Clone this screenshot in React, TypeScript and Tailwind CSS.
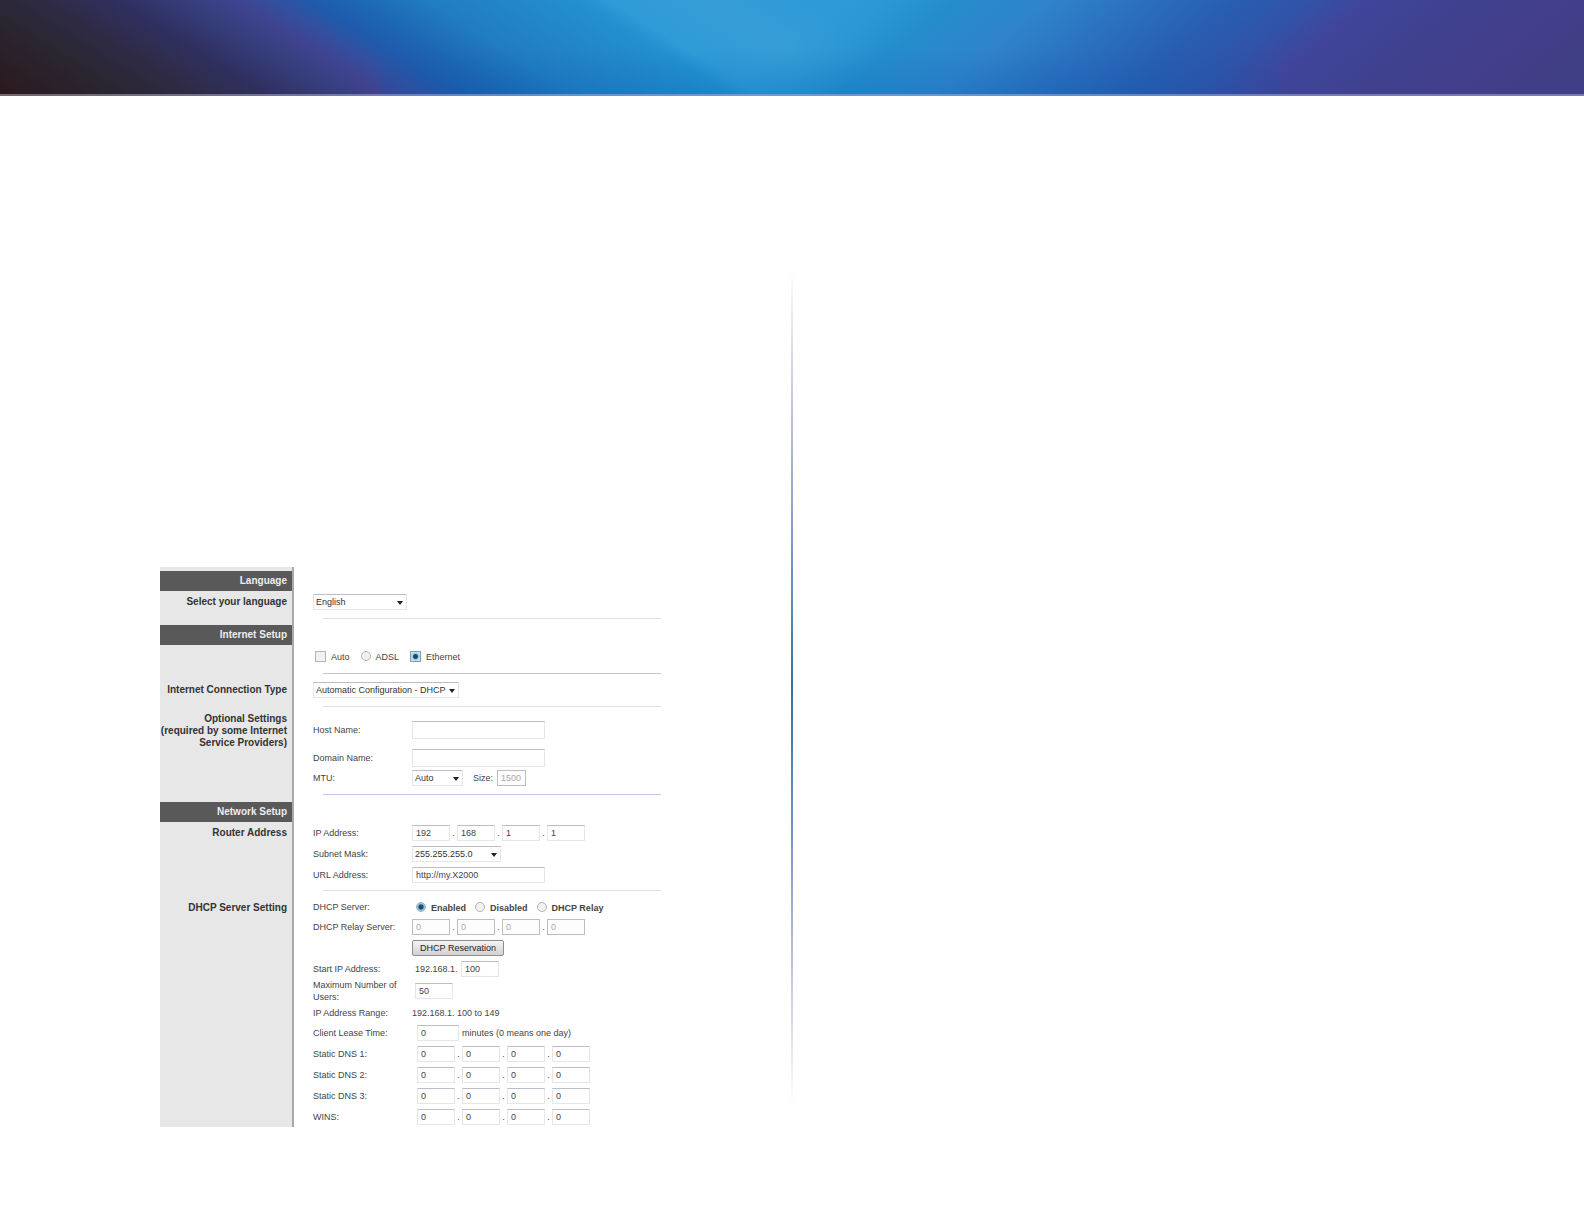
import type { InputHTMLAttributes, ReactNode } from 'react'
import clsx from 'clsx'

const inputBase =
  'border border-[#e6e6ea] border-t-[#bcbcc4] bg-white px-[3px] text-[9px] leading-3 text-[#444] outline-none disabled:border-[#bdbdbd] disabled:bg-[#fdfdfd] disabled:text-[#aaa]'

function Banner() {
  return (
    <svg className="block h-24 w-full" viewBox="0 0 1584 96" preserveAspectRatio="none" aria-hidden="true">
      <defs>
        <linearGradient id="left" gradientUnits="userSpaceOnUse" x1="-160" x2="800" y1="0" y2="0" gradientTransform="matrix(1 0 1.6 1 0 0)">
          <stop offset="0" stopColor="#2b191c" />
          <stop offset="0.14" stopColor="#2a2631" />
          <stop offset="0.22" stopColor="#2f2b47" />
          <stop offset="0.29" stopColor="#2f3060" />
          <stop offset="0.36" stopColor="#363e7c" />
          <stop offset="0.41" stopColor="#40438f" />
          <stop offset="0.45" stopColor="#334f9f" />
          <stop offset="0.49" stopColor="#1f5bac" />
          <stop offset="0.54" stopColor="#1d68b4" />
          <stop offset="0.61" stopColor="#217cc1" />
          <stop offset="0.77" stopColor="#2390cf" />
          <stop offset="0.8" stopColor="#2f9bd7" />
          <stop offset="0.9" stopColor="#369dd6" />
          <stop offset="1" stopColor="#2f9ad8" />
        </linearGradient>
        <linearGradient id="right" gradientUnits="userSpaceOnUse" x1="840" x2="1640" y1="0" y2="0" gradientTransform="matrix(1 0 -1.2 1 0 0)">
          <stop offset="0" stopColor="#2a98d4" stopOpacity="0" />
          <stop offset="0.14" stopColor="#248dcc" />
          <stop offset="0.26" stopColor="#2f84cb" />
          <stop offset="0.38" stopColor="#2a70be" />
          <stop offset="0.5" stopColor="#285db0" />
          <stop offset="0.58" stopColor="#3054a9" />
          <stop offset="0.66" stopColor="#40459a" />
          <stop offset="0.8" stopColor="#3f418e" />
          <stop offset="0.92" stopColor="#433e8b" />
          <stop offset="1" stopColor="#403e84" />
        </linearGradient>
        <linearGradient id="shade" x1="0" x2="0" y1="0" y2="1">
          <stop offset="0.5" stopColor="#0058b0" stopOpacity="0" />
          <stop offset="1" stopColor="#0058b0" stopOpacity="0.2" />
        </linearGradient>
      </defs>
      <rect width="1584" height="96" fill="url(#left)" />
      <rect width="1584" height="96" fill="url(#right)" />
      <rect x="380" width="900" height="96" fill="url(#shade)" />
      <rect y="94" width="1584" height="2" fill="#b9b4cc" opacity="0.5" />
    </svg>
  )
}

function SideHeading({ children }: { children: ReactNode }) {
  return <h2 className="h-5 bg-[#595959] pr-[5px] text-[10px] leading-5 font-bold text-[#eee]">{children}</h2>
}

function SideLabel({ children, className }: { children: ReactNode; className?: string }) {
  return <p className={clsx('pr-[5px] text-[10px] leading-3 font-bold text-[#333]', className)}>{children}</p>
}

function Row({ label, htmlFor, children }: { label: string; htmlFor?: string; children: ReactNode }) {
  return (
    <div className="flex min-h-5 items-center">
      <label htmlFor={htmlFor} className="w-[99px] shrink-0 pr-2 text-[9px] leading-3">
        {label}
      </label>
      {children}
    </div>
  )
}

function Divider({ className = 'border-[#dcdce2]' }: { className?: string }) {
  return <hr className={clsx('ml-2.5 w-[338px] border-t', className)} />
}

function Select({ id, label, options, className }: { id: string; label?: string; options: string[]; className: string }) {
  return (
    <span className={clsx('relative inline-block', className)}>
      <select
        id={id}
        aria-label={label}
        className="block h-4 w-full appearance-none border border-[#e6e6ea] border-t-[#bcbcc4] bg-white px-0.5 text-[9px] leading-3 text-[#333] outline-none"
      >
        {options.map((option) => (
          <option key={option}>{option}</option>
        ))}
      </select>
      <svg className="pointer-events-none absolute top-[7px] right-1 h-1 w-1.5" viewBox="0 0 6 4" aria-hidden="true">
        <path d="M0 0h6L3 4z" fill="#222" />
      </svg>
    </span>
  )
}

function Octets({ name, id, values, disabled }: { name: string; id: string; values: string[]; disabled?: boolean }) {
  return (
    <div className="flex items-center">
      {values.map((value, i) => (
        <div key={i} className="flex items-center">
          {i > 0 && <span className="w-[7px] text-center text-[9px] leading-3">.</span>}
          <input
            id={i === 0 ? id : undefined}
            aria-label={`${name} octet ${i + 1}`}
            defaultValue={value}
            disabled={disabled}
            className={clsx(inputBase, 'h-4 w-[38px]')}
          />
        </div>
      ))}
    </div>
  )
}

interface RadioProps extends InputHTMLAttributes<HTMLInputElement> {
  text: string
  square?: boolean
  bold?: boolean
}

function Radio({ text, square, bold, className, ...props }: RadioProps) {
  return (
    <label className={clsx('flex items-center gap-[5px] text-[9px] leading-3', bold && 'font-bold', className)}>
      <input
        type="radio"
        className={clsx(
          'appearance-none border border-[#b4b4b4] bg-[#f1f1f1]',
          square
            ? 'size-[11px] checked:border-[#7d9db0] checked:bg-[radial-gradient(circle,#174f6c_2px,#9ccbe0_3px,#d5e6ee_5px)]'
            : 'size-2.5 rounded-full checked:border-[#9ab0bd] checked:bg-[radial-gradient(circle,#174f6c_2px,#7fb3cc_3px,#e3eef3_5px)]',
        )}
        {...props}
      />
      <span className="pt-0.5">{text}</span>
    </label>
  )
}

function Sidebar() {
  return (
    <aside className="w-[134px] shrink-0 border-r-2 border-[#a9a9a9] bg-[#e7e7e7] pt-1 text-right">
      <SideHeading>Language</SideHeading>
      <SideLabel className="pt-[5px] pb-[17px]">Select your language</SideLabel>
      <SideHeading>Internet Setup</SideHeading>
      <SideLabel className="pt-[39px]">Internet Connection Type</SideLabel>
      <SideLabel className="pt-[17px] pb-[53px]">
        Optional Settings
        <br />
        <span className="whitespace-nowrap">(required by some Internet</span>
        <br />
        Service Providers)
      </SideLabel>
      <SideHeading>Network Setup</SideHeading>
      <SideLabel className="pt-[5px]">Router Address</SideLabel>
      <SideLabel className="pt-[63px]">DHCP Server Setting</SideLabel>
    </aside>
  )
}

const zeros = ['0', '0', '0', '0']
const dnsRows = ['Static DNS 1:', 'Static DNS 2:', 'Static DNS 3:', 'WINS:']

function SetupForm() {
  return (
    <form className="flex-1 pl-[19px] text-[#444]">
      <div className="mt-[25px] mb-1.5 flex h-5 items-center">
        <Select id="language" label="Select your language" options={['English']} className="w-[94px]" />
      </div>
      <Divider />

      <div className="mt-[27px] mb-[7px] flex h-5 items-center gap-[11px] pl-0.5">
        <Radio name="mode" text="Auto" square />
        <Radio name="mode" text="ADSL" />
        <Radio name="mode" text="Ethernet" square defaultChecked />
      </div>
      <Divider className="border-[#c6c6d2]" />

      <div className="my-1.5 flex h-5 items-center">
        <Select
          id="connection"
          label="Internet Connection Type"
          options={['Automatic Configuration - DHCP']}
          className="w-[146px]"
        />
      </div>
      <Divider />

      <div className="mt-[13px] mb-1.5">
        <Row label="Host Name:" htmlFor="host">
          <input id="host" className={clsx(inputBase, 'h-[18px] w-[133px]')} />
        </Row>
        <div className="h-2" />
        <Row label="Domain Name:" htmlFor="domain">
          <input id="domain" className={clsx(inputBase, 'h-[18px] w-[133px]')} />
        </Row>
        <Row label="MTU:" htmlFor="mtu">
          <Select id="mtu" options={['Auto']} className="w-[51px]" />
          <label htmlFor="size" className="ml-2.5 w-6 text-[9px] leading-3">
            Size:
          </label>
          <input id="size" defaultValue="1500" disabled className={clsx(inputBase, 'h-4 w-[29px]')} />
        </Row>
      </div>
      <Divider className="border-[#c4c4ea]" />

      <div className="mt-7 mb-[5px] grid gap-px">
        <Row label="IP Address:" htmlFor="ip">
          <Octets id="ip" name="IP Address" values={['192', '168', '1', '1']} />
        </Row>
        <Row label="Subnet Mask:" htmlFor="subnet">
          <Select id="subnet" options={['255.255.255.0']} className="w-[89px]" />
        </Row>
        <Row label="URL Address:" htmlFor="url">
          <input id="url" defaultValue="http://my.X2000" className={clsx(inputBase, 'h-4 w-[133px]')} />
        </Row>
      </div>
      <Divider />

      <div className="mt-1.5">
        <Row label="DHCP Server:">
          <div className="flex items-center gap-[9px] pl-1">
            <Radio name="dhcp" text="Enabled" bold defaultChecked />
            <Radio name="dhcp" text="Disabled" bold />
            <Radio name="dhcp" text="DHCP Relay" bold />
          </div>
        </Row>
        <Row label="DHCP Relay Server:" htmlFor="relay">
          <Octets id="relay" name="DHCP Relay Server" values={zeros} disabled />
        </Row>
        <div className="flex h-[22px] items-center pl-[99px]">
          <button
            type="button"
            className="h-4 w-[92px] rounded-xs border border-[#8e8e8e] bg-linear-to-b from-[#f4f4f4] to-[#d2d2d2] text-[9px] leading-3 text-[#222]"
          >
            DHCP Reservation
          </button>
        </div>
        <Row label="Start IP Address:" htmlFor="start">
          <span className="w-[49px] pl-[3px] text-[9px] leading-3">192.168.1.</span>
          <input id="start" defaultValue="100" className={clsx(inputBase, 'h-4 w-[38px]')} />
        </Row>
        <Row label="Maximum Number of Users:" htmlFor="users">
          <input id="users" defaultValue="50" className={clsx(inputBase, 'ml-[3px] h-4 w-[38px]')} />
        </Row>
        <Row label="IP Address Range:">
          <span className="text-[9px] leading-3">192.168.1. 100 to 149</span>
        </Row>
        <div className="grid gap-px">
          <Row label="Client Lease Time:" htmlFor="lease">
            <input id="lease" defaultValue="0" className={clsx(inputBase, 'ml-[5px] h-4 w-[42px]')} />
            <span className="pl-[3px] text-[9px] leading-3">minutes (0 means one day)</span>
          </Row>
          {dnsRows.map((label) => (
            <Row key={label} label={label} htmlFor={label}>
              <div className="pl-[5px]">
                <Octets id={label} name={label} values={zeros} />
              </div>
            </Row>
          ))}
        </div>
      </div>
    </form>
  )
}

export default function App() {
  return (
    <div className="min-h-screen bg-white font-['Liberation_Sans',Arial,sans-serif]">
      <header>
        <Banner />
      </header>
      <main className="grid grid-cols-[1fr_2px_1fr] pt-[170px] pb-24">
        <section className="flex pt-[301px] pl-40">
          <Sidebar />
          <SetupForm />
        </section>
        <div className="mb-5 bg-[linear-gradient(to_bottom,#fff,#c9c4de_16%,#7f9cc8_32%,#35729f_50%,#6f8fc4_66%,#c4c4de_84%,#fff)]" />
        <section />
      </main>
    </div>
  )
}
